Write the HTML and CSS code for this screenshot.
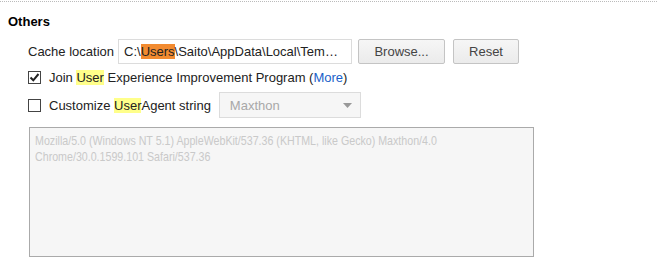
FILE: index.html
```html
<!DOCTYPE html>
<html lang="en">
<head>
    <meta charset="UTF-8">
    <title>Others</title>
    <link rel="stylesheet" href="styles.css">
</head>
<body>
    <div class="section">
        <h3 class="title">Others</h3>
        <div class="row cache">
            <span class="label">Cache location</span>
            <div class="path">C:\<span class="hit">Users</span>\Saito\AppData\Local\Tem…</div>
            <button class="btn browse">Browse...</button>
            <button class="btn reset">Reset</button>
        </div>
        <label class="row check">
            <span class="box on">
                <svg width="11" height="11" viewBox="0 0 11 11"><path d="M1.5 5.5 L4.3 8.3 L9.5 2" fill="none" stroke="#222" stroke-width="2"/></svg>
            </span>
            <span>Join <span class="mark">User</span> Experience Improvement Program (<a href="#">More</a>)</span>
        </label>
        <div class="row check ua">
            <span class="box"></span>
            <span>Customize <span class="mark">User</span>Agent string</span>
            <div class="select">
                <span>Maxthon</span>
                <svg width="9" height="5" viewBox="0 0 9 5"><path d="M0 0 L9 0 L4.5 5 Z" fill="#999"/></svg>
            </div>
        </div>
        <div class="uabox">
            <div class="uatext">Mozilla/5.0 (Windows NT 5.1) AppleWebKit/537.36 (KHTML, like Gecko) Maxthon/4.0 Chrome/30.0.1599.101 Safari/537.36</div>
        </div>
    </div>
</body>
</html>
```

FILE: styles.css
```css
*{
    margin: 0;
    padding: 0;
    box-sizing: border-box;
}
body{
    background: #fff;
    font-family: "Liberation Sans", Arial, sans-serif;
    font-size: 13px;
    color: #222;
}
.section{
    border-top: 1px dotted #bbb;
    margin-top: 1px;
    padding: 12px 8px 0 8px;
}
.title{
    font-size: 13px;
    font-weight: bold;
    color: #000;
    height: 16px;
    line-height: 16px;
}
.row{
    display: flex;
    align-items: center;
    margin-left: 20px;
}
.cache{
    margin-top: 9px;
    height: 25px;
}
.label{
    width: 90px;
}
.path{
    width: 234px;
    height: 25px;
    line-height: 23px;
    border: 1px solid #dcdcdc;
    padding: 0 5px;
    color: #222;
    white-space: nowrap;
    overflow: hidden;
}
.hit{
    background: #f28b30;
}
.mark{
    background: #ffff8a;
}
.btn{
    height: 25px;
    border: 1px solid #c4c4c4;
    border-radius: 2px;
    background: linear-gradient(#f6f6f6, #ebebeb);
    font-family: inherit;
    font-size: 13px;
    color: #444;
}
.browse{
    width: 87px;
    margin-left: 6px;
}
.reset{
    width: 66px;
    margin-left: 8px;
}
.check{
    height: 26px;
}
.check .box{
    width: 13px;
    height: 13px;
    border: 1px solid #444;
    background: #fff;
    margin-right: 8px;
    display: flex;
    align-items: center;
    justify-content: center;
}
a{
    color: #1a5fc9;
    text-decoration: none;
}
.ua{
    margin-top: 2px;
}
.select{
    width: 142px;
    height: 26px;
    margin-left: 8px;
    border: 1px solid #dcdcdc;
    background: #f6f6f6;
    color: #a8a8a8;
    display: flex;
    align-items: center;
    justify-content: space-between;
    padding: 0 8px 0 10px;
}
.uabox{
    margin: 9px 0 0 21px;
    width: 505px;
    height: 130px;
    border: 1px solid #aaa;
    background: #f6f6f6;
    color: #c9c9c9;
    padding: 5px 0 0 5px;
    line-height: 16px;
    overflow: hidden;
}
/* the ua string is drawn in a narrow face */
.uatext{
    width: 560px;
    transform: scaleX(0.82);
    transform-origin: 0 0;
}
```
